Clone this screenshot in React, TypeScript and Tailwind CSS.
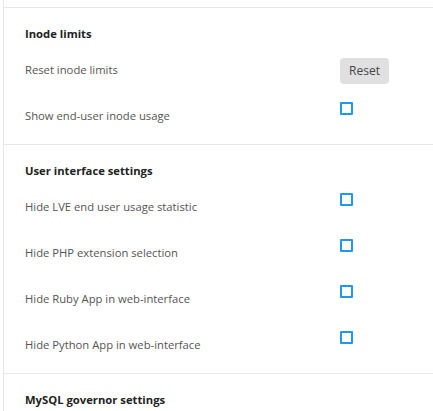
import React from "react";

const font = { fontFamily: '"Open Sans", "Noto Sans", sans-serif' };

function Checkbox() {
  return <div className="mt-[9px] h-[13px] w-[13px] rounded-[1px] border-2 border-[#2196f3] bg-white" />;
}

function Row({ label, control }: { label: string; control: React.ReactNode }) {
  return (
    <div className="relative flex h-[46px]">
      <div className="flex w-[336px] items-center pl-[21px] text-[11.25px] leading-[16px] text-[#555]">{label}</div>
      <div className="flex-1">{control}</div>
    </div>
  );
}

function Heading({ children }: { children: React.ReactNode }) {
  return (
    <div className="pb-[5px] pl-[21px] pt-[18px] text-[11.25px] font-bold leading-[16px] text-[#222]">{children}</div>
  );
}

export default function App() {
  return (
    <div className="h-[411px] w-[433px] overflow-hidden bg-white pl-[3px]" style={font}>
      <div className="h-full border-l border-[#e6e6e6]">
        <div className="h-[7px]" />
        <div className="border-t border-[#e8e8e8] pb-[5px]">
          <Heading>Inode limits</Heading>
          <Row
            label="Reset inode limits"
            control={
              <div className="pt-[10px]">
                <button className="h-[26px] w-[49px] rounded-[4px] bg-[#e0e0e0] text-[12px] text-[#444]">Reset</button>
              </div>
            }
          />
          <Row label="Show end-user inode usage" control={<Checkbox />} />
        </div>
        <div className="border-t border-[#e8e8e8] pb-[5px]">
          <Heading>User interface settings</Heading>
          <Row label="Hide LVE end user usage statistic" control={<Checkbox />} />
          <Row label="Hide PHP extension selection" control={<Checkbox />} />
          <Row label="Hide Ruby App in web-interface" control={<Checkbox />} />
          <Row label="Hide Python App in web-interface" control={<Checkbox />} />
        </div>
        <div className="border-t border-[#e8e8e8]">
          <Heading>MySQL governor settings</Heading>
        </div>
      </div>
    </div>
  );
}
